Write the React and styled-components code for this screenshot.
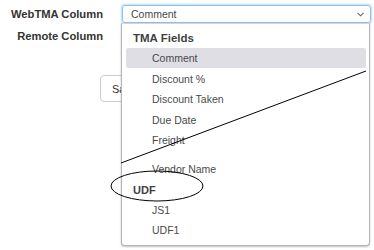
import React from "react";
import styled, { createGlobalStyle } from "styled-components";

const Global = createGlobalStyle`
  html, body { margin: 0; padding: 0; background: #fff; }
  body { font-family: "Liberation Sans", Arial, sans-serif; width: 374px; height: 250px; overflow: hidden; }
`;

const Page = styled.div`
  position: relative;
  width: 374px;
  height: 250px;
`;

const Form = styled.div`
  display: grid;
  grid-template-columns: 103px 249px;
  column-gap: 19px;
  row-gap: 4px;
  padding-top: 5px;
  align-items: center;
`;

const Label = styled.div`
  text-align: right;
  font-weight: bold;
  font-size: 11.2px;
  color: #333;
  line-height: 18px;
`;

const SelectBox = styled.div`
  position: relative;
  height: 18px;
  border: 1px solid #8fc0ee;
  border-radius: 3px;
  box-shadow: 0 0 2px 1px rgba(102, 175, 233, 0.45);
  display: flex;
  align-items: center;
  padding-left: 8px;
  font-size: 10.5px;
  color: #4a4a4a;
  box-sizing: border-box;
`;

const Caret = styled.svg`
  position: absolute;
  right: 6px;
  top: 6px;
`;

const Actions = styled.div`
  display: flex;
  padding-left: 100px;
  margin-top: 30px;
`;

const Button = styled.div`
  height: 27px;
  padding: 0 11px;
  border: 1px solid #ccc;
  border-radius: 4px;
  display: flex;
  align-items: center;
  font-size: 11px;
  color: #333;
  box-sizing: border-box;
`;

const Menu = styled.div`
  position: absolute;
  left: 121px;
  top: 23px;
  width: 249px;
  height: 223px;
  box-sizing: border-box;
  background: #fff;
  border: 1px solid #b5b5b5;
  border-top: 1px solid #d5d5d5;
  border-radius: 0 0 4px 4px;
  box-shadow: 0 1px 2px rgba(0, 0, 0, 0.25);
  padding: 4px 3px 4px 4px;
  display: flex;
  flex-direction: column;
`;

const Group = styled.div`
  height: 20px;
  line-height: 20px;
  padding-left: 7px;
  font-weight: bold;
  font-size: ${(p) => p.$size || 11.5}px;
  color: #3f3f3f;
`;

const Item = styled.div`
  height: 20px;
  line-height: 20px;
  padding-left: 26px;
  margin-bottom: 0.6px;
  font-size: 10.5px;
  color: #4a4a4a;
  border-radius: 2px;
  background: ${(p) => (p.$active ? "#dfdee4" : "transparent")};
`;

const Spacer = styled.div`
  height: 11px;
`;

const Overlay = styled.svg`
  position: absolute;
  left: 0;
  top: 0;
  pointer-events: none;
`;

export default function App() {
  return (
    <Page>
      <Global />
      <Form>
        <Label>WebTMA Column</Label>
        <SelectBox>
          Comment
          <Caret width="7" height="5" viewBox="0 0 7 5">
            <path d="M0.5 0.8 L3.5 3.8 L6.5 0.8" fill="none" stroke="#666" strokeWidth="1.1" />
          </Caret>
        </SelectBox>
        <Label>Remote Column</Label>
        <div />
      </Form>
      <Actions>
        <Button>Save</Button>
      </Actions>
      <Menu>
        <Group>TMA Fields</Group>
        <Item $active>Comment</Item>
        <Item>Discount %</Item>
        <Item>Discount Taken</Item>
        <Item>Due Date</Item>
        <Item>Freight</Item>
        <Spacer />
        <Item>Vendor Name</Item>
        <Group $size={11}>UDF</Group>
        <Item>JS1</Item>
        <Item>UDF1</Item>
      </Menu>
      <Overlay width="374" height="250" viewBox="0 0 374 250">
        <line x1="121" y1="163" x2="366" y2="71" stroke="#000" strokeWidth="1" />
        <ellipse cx="157" cy="186" rx="46" ry="15" fill="none" stroke="#000" strokeWidth="1" />
      </Overlay>
    </Page>
  );
}
